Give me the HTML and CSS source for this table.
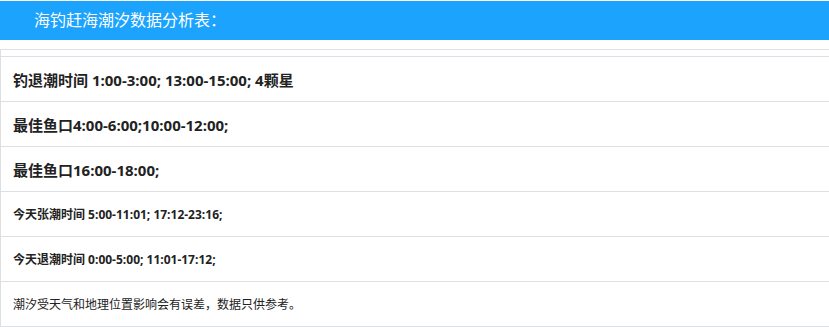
FILE: index.html
```html
<!DOCTYPE html>
<html lang="zh-CN">
<head>
<meta charset="utf-8">
<title>海钓赶海潮汐数据分析表</title>
<link rel="stylesheet" href="styles.css">
</head>
<body>
<div class="header">海钓赶海潮汐数据分析表：</div>
<div class="table">
  <div class="spacer"></div>
  <div class="row big">钓退潮时间 1:00-3:00; 13:00-15:00; 4颗星</div>
  <div class="row big">最佳鱼口4:00-6:00;10:00-12:00;</div>
  <div class="row big">最佳鱼口16:00-18:00;</div>
  <div class="row small bold">今天张潮时间 5:00-11:01; 17:12-23:16;</div>
  <div class="row small bold">今天退潮时间 0:00-5:00; 11:01-17:12;</div>
  <div class="row small">潮汐受天气和地理位置影响会有误差，数据只供参考。</div>
</div>
</body>
</html>
```
FILE: styles.css
```css
html, body {
  margin: 0;
  padding: 0;
  background: #fff;
}
body {
  font-family: "Open Sans", "Noto Sans CJK SC", sans-serif;
  color: #222;
}
.header {
  margin-top: 1px;
  height: 39px;
  background: #1ba3fe;
  color: #fff;
  font-size: 16px;
  line-height: 39px;
  padding-left: 34px;
}
.table {
  margin-top: 9px;
  border-left: 1px solid #dcdfe3;
  border-top: 1px solid #dcdfe3;
}
.spacer {
  height: 6px;
  border-bottom: 1px solid #dcdfe3;
}
.row {
  height: 44px;
  display: flex;
  align-items: center;
  padding-left: 12px;
  border-bottom: 1px solid #dcdfe3;
}
.big {
  font-size: 15px;
  font-weight: 700;
}
.small {
  font-size: 12px;
}
.bold {
  font-weight: 700;
}
```
